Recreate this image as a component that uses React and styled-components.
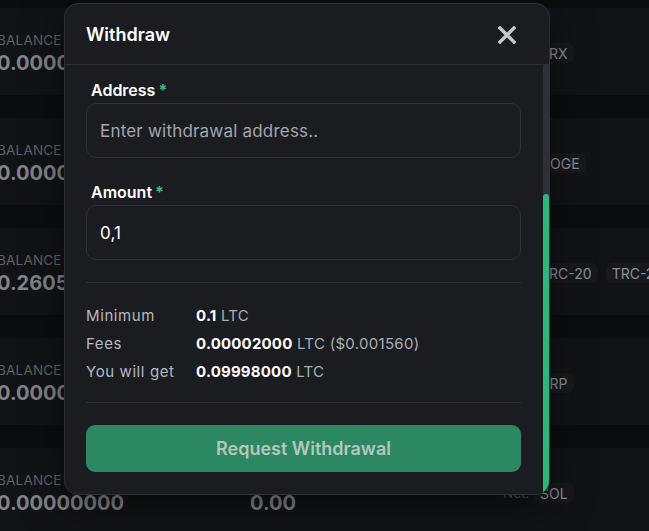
import styled, { createGlobalStyle } from "styled-components";

const GlobalStyle = createGlobalStyle`
  html, body {
    margin: 0;
    padding: 0;
    background: #0b0c0e;
    font-family: Inter, "Noto Sans", sans-serif;
    overflow: hidden;
  }
  * { box-sizing: border-box; }
`;

const Page = styled.div`
  position: relative;
  width: 649px;
  height: 531px;
  overflow: hidden;
  background: #0b0c0e;
`;

const CardList = styled.div`
  display: flex;
  flex-direction: column;
  gap: 23px;
  padding-top: 8px;
  margin-left: -3px;
`;

const Card = styled.div`
  display: flex;
  height: 87px;
  width: 720px;
  background: #121317;
`;

const Col = styled.div`
  width: ${(p) => p.$w}px;
  flex-shrink: 0;
  padding-top: 24px;
`;

const Label = styled.div`
  font-size: 13.5px;
  line-height: 16px;
  color: #5d6168;
  letter-spacing: 0.2px;
`;

const Big = styled.div`
  margin-top: 3px;
  font-size: 20px;
  line-height: 24px;
  font-weight: 700;
  color: #818489;
`;

const NetCol = styled.div`
  display: flex;
  align-items: center;
  gap: 8px;
  padding-top: 35px;
  height: 55px;
`;

const NetLabel = styled.span`
  font-size: 13.5px;
  color: #4d5157;
  width: 23px;
`;

const Chip = styled.span`
  display: inline-flex;
  align-items: center;
  height: 20px;
  padding: 0 6px;
  border-radius: 6px;
  background: #18191d;
  color: #8b8f96;
  font-size: 14px;
`;

const Modal = styled.div`
  position: absolute;
  left: 64px;
  top: 3px;
  width: 486px;
  height: 492px;
  background: #1b1c20;
  border: 1px solid #2c3036;
  border-radius: 14px;
  overflow: hidden;
  display: flex;
  flex-direction: column;
  box-shadow: 0 10px 40px rgba(0, 0, 0, 0.5);
`;

const Header = styled.div`
  height: 61px;
  flex-shrink: 0;
  display: flex;
  align-items: center;
  justify-content: space-between;
  padding: 0 33px 0 21px;
  border-bottom: 1px solid #2b2f35;
`;

const Title = styled.h2`
  margin: 0;
  font-size: 18px;
  font-weight: 600;
  color: #ffffff;
`;

const CloseButton = styled.button`
  width: 18px;
  height: 18px;
  padding: 0;
  border: none;
  background: none;
  display: flex;
  cursor: pointer;
  margin-top: 1px;
`;

const Body = styled.div`
  flex: 1;
  display: flex;
  min-height: 0;
`;

const Content = styled.div`
  flex: 1;
  padding: 15px 22px 0 21px;
`;

const Track = styled.div`
  width: 6px;
  flex-shrink: 0;
  background: #2d3137;
  display: flex;
  flex-direction: column;
`;

const Thumb = styled.div`
  margin-top: 129px;
  flex: 1;
  background: #2fb47b;
  border-radius: 3px 3px 0 0;
`;

const Field = styled.div`
  display: flex;
  flex-direction: column;
  margin-bottom: ${(p) => p.$mb || 0}px;
`;

const FieldLabel = styled.label`
  padding-left: 5px;
  font-size: 16px;
  line-height: 20px;
  font-weight: 600;
  color: #ffffff;
  margin-bottom: 3px;
  display: flex;
  align-items: center;
  gap: 3px;
`;

const Star = styled.span`
  color: #2fc17f;
  font-weight: 700;
`;

const Input = styled.input`
  height: 55px;
  width: 100%;
  border: 1px solid #2e3137;
  border-radius: 10px;
  background: #1b1c20;
  padding: 0 13px;
  font-family: inherit;
  font-size: 17px;
  letter-spacing: 0.2px;
  color: #ffffff;
  outline: none;
  &::placeholder {
    color: #a2a6ad;
  }
`;

const Divider = styled.div`
  height: 1px;
  background: #2b2f35;
  margin: ${(p) => p.$m};
`;

const InfoList = styled.div`
  display: flex;
  flex-direction: column;
`;

const InfoRow = styled.div`
  display: flex;
  height: 28px;
  align-items: center;
  font-size: 15px;
  letter-spacing: 0.3px;
`;

const InfoLabel = styled.span`
  width: 110px;
  color: #b5b9c0;
  letter-spacing: 0.6px;
`;

const InfoValue = styled.span`
  color: #a9adb4;
  b {
    color: #ffffff;
    font-weight: 700;
    letter-spacing: 0.2px;
  }
`;

const SubmitButton = styled.button`
  width: 100%;
  height: 47px;
  border: none;
  border-radius: 9px;
  background: #2b8862;
  color: #b6c6be;
  font-family: inherit;
  font-size: 18px;
  font-weight: 600;
  cursor: pointer;
`;

const rows = [
  { value: "0.00000000", chips: ["TRX"] },
  { value: "0.00000000", chips: ["DOGE"] },
  { value: "0.26050000", chips: ["TRC-20", "TRC-20"] },
  { value: "0.00000000", chips: ["XRP"] },
  { value: "0.00000000", chips: ["SOL"] },
];

const App = () => {
  return (
    <Page>
      <GlobalStyle />
      <CardList>
        {rows.map((r, i) => (
          <Card key={i}>
            <Col $w={253}>
              <Label>BALANCE</Label>
              <Big>{r.value}</Big>
            </Col>
            <Col $w={253}>
              <Label>VALUE</Label>
              <Big>0.00</Big>
            </Col>
            <NetCol>
              <NetLabel>Net.</NetLabel>
              {r.chips.map((c, j) => (
                <Chip key={j}>{c}</Chip>
              ))}
            </NetCol>
          </Card>
        ))}
      </CardList>

      <Modal>
        <Header>
          <Title>Withdraw</Title>
          <CloseButton aria-label="Close">
            <svg width="18" height="18" viewBox="0 0 18 18">
              <path d="M2 2L16 16M16 2L2 16" stroke="#c6c6c6" strokeWidth="3.4" strokeLinecap="square" />
            </svg>
          </CloseButton>
        </Header>
        <Body>
          <Content>
            <Field $mb={24}>
              <FieldLabel>
                Address<Star>*</Star>
              </FieldLabel>
              <Input placeholder="Enter withdrawal address.." />
            </Field>
            <Field>
              <FieldLabel>
                Amount<Star>*</Star>
              </FieldLabel>
              <Input defaultValue="0,1" />
            </Field>
            <Divider $m="22px 0 18px" />
            <InfoList>
              <InfoRow>
                <InfoLabel>Minimum</InfoLabel>
                <InfoValue>
                  <b>0.1</b> LTC
                </InfoValue>
              </InfoRow>
              <InfoRow>
                <InfoLabel>Fees</InfoLabel>
                <InfoValue>
                  <b>0.00002000</b> LTC ($0.001560)
                </InfoValue>
              </InfoRow>
              <InfoRow>
                <InfoLabel>You will get</InfoLabel>
                <InfoValue>
                  <b>0.09998000</b> LTC
                </InfoValue>
              </InfoRow>
            </InfoList>
            <Divider $m="17px 0 22px" />
            <SubmitButton>Request Withdrawal</SubmitButton>
          </Content>
          <Track>
            <Thumb />
          </Track>
        </Body>
      </Modal>
    </Page>
  );
};

export default App;
